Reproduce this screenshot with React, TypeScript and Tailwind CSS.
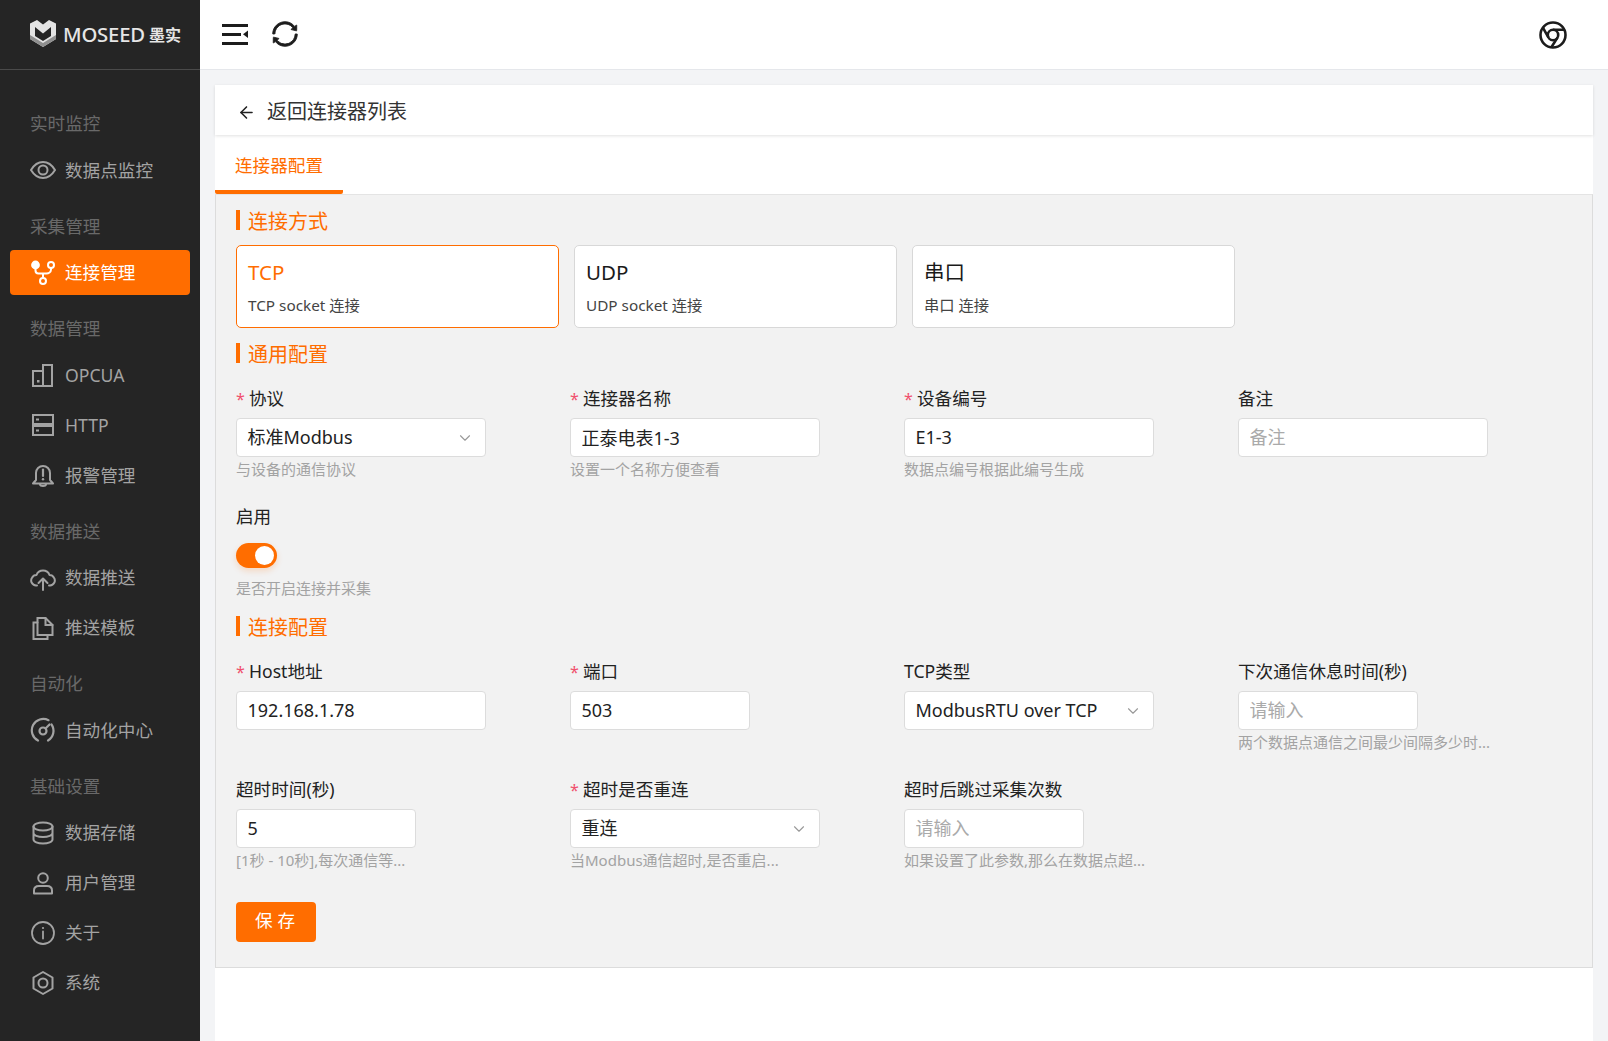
import React from "react";
import { ArrowLeft, ChevronDown } from "lucide-react";
import { AiOutlineSync } from "react-icons/ai";

const S = ({ children, c = "#a3a3a3" }: { children: React.ReactNode; c?: string }) => (
  <svg width="26" height="26" viewBox="0 0 26 26" fill="none" stroke={c} strokeWidth="1.8" strokeLinecap="round" strokeLinejoin="round">
    {children}
  </svg>
);

const icons: Record<string, React.ReactNode> = {
  eye: (
    <S>
      <path d="M1 13c3-5 7-8 12-8s9 3 12 8c-3 5-7 8-12 8S4 18 1 13z" strokeWidth="2" />
      <circle cx="13" cy="13" r="4.5" strokeWidth="2" />
    </S>
  ),
  branch: (
    <S c="#ffffff">
      <circle cx="5.5" cy="5" r="3.5" fill="#fff" />
      <circle cx="21" cy="5" r="3" strokeWidth="2" />
      <circle cx="13" cy="21" r="3" strokeWidth="2" />
      <path d="M5.5 8v2.5c0 2 1.5 3 3 3h8c2 0 4.5-1.5 4.5-4V8M13 13.5V18" strokeWidth="2" />
    </S>
  ),
  building: (
    <S>
      <path d="M3 9h10v15H3zM13 24h9V3h-9v6" strokeLinecap="butt" strokeLinejoin="miter" strokeWidth="2" />
      <rect x="7" y="18" width="2.5" height="2.5" fill="#a3a3a3" stroke="none" />
    </S>
  ),
  server: (
    <S>
      <rect x="3" y="3" width="20" height="9" strokeWidth="2" strokeLinejoin="miter" />
      <rect x="3" y="14" width="20" height="9" strokeWidth="2" strokeLinejoin="miter" />
      <path d="M6 7.5h3M6 18.5h3" strokeLinecap="butt" />
    </S>
  ),
  bell: (
    <S>
      <path d="M6 11a7 7 0 0 1 14 0v7l3 3.5H3L6 18z" strokeWidth="2" />
      <path d="M10 22.5c.5 2 5.500 2 6 0" strokeWidth="2" />
      <path d="M13 7.5v6.500" strokeWidth="2.2" />
      <circle cx="13" cy="17.200" r="1.200" fill="#a3a3a3" stroke="none" />
    </S>
  ),
  cloud: (
    <S>
      <path d="M7 20.500H6A5 5 0 0 1 2 12.800 5 5 0 0 1 6.500 10 7 7 0 0 1 19.500 10 5 5 0 0 1 24 12.800 5 5 0 0 1 20 20.500H19" strokeWidth="2" />
      <path d="M13 25V14M8.500 18l4.500-4.500 4.500 4.500" strokeWidth="2" />
    </S>
  ),
  files: (
    <S>
      <path d="M7.500 3h8l7 7v10h-15z" strokeWidth="2" strokeLinejoin="miter" />
      <path d="M15.500 3v7h7" strokeWidth="2" strokeLinejoin="miter" />
      <path d="M7.500 7.500H3.500V24h14v-4" strokeWidth="2" strokeLinejoin="miter" />
    </S>
  ),
  gauge: (
    <S>
      <path d="M8 23.500A11.200 11.200 0 0 1 18.500 3.200" strokeWidth="2.200" />
      <path d="M21.500 7.500A11.200 11.200 0 0 1 18 23.500" strokeWidth="2.200" />
      <circle cx="13" cy="14" r="3.500" strokeWidth="2.200" />
      <path d="M15.500 11.500l4-4" strokeWidth="2.200" />
    </S>
  ),
  db: (
    <S>
      <ellipse cx="13" cy="6.500" rx="9.500" ry="4" strokeWidth="2" />
      <path d="M3.500 6.500v13c0 2.200 4.200 4 9.500 4s9.500-1.800 9.500-4v-13M3.500 13c0 2.200 4.200 4 9.500 4s9.500-1.800 9.500-4" strokeWidth="2" />
    </S>
  ),
  user: (
    <S>
      <circle cx="13" cy="8" r="4.800" strokeWidth="2" />
      <path d="M4 23.500v-3c0-3 2-4.500 5-4.500h8c3 0 5 1.500 5 4.500v3z" strokeWidth="2" />
    </S>
  ),
  info: (
    <S>
      <circle cx="13" cy="13" r="11" strokeWidth="1.800" />
      <path d="M13 11.500v7" strokeWidth="1.800" />
      <circle cx="13" cy="8" r="1.100" fill="#a3a3a3" stroke="none" />
    </S>
  ),
  hex: (
    <S>
      <path d="M13 2l9.500 5.500v11L13 24l-9.500-5.500v-11z" strokeWidth="2" />
      <circle cx="13" cy="13" r="4.500" strokeWidth="2" />
    </S>
  ),
};

const Label = ({ t }: { t: string }) => (
  <div className="h-[52.5px] pt-[4.5px] flex items-center pl-[30px] text-[17.6px] text-[#696969]">{t}</div>
);

const Item = ({ icon, t, active }: { icon: string; t: string; active?: boolean }) => (
  <div
    className={`h-[45px] mb-[5px] mx-[10px] pl-[20px] flex items-center gap-[9px] rounded-[4px] text-[17.6px] ${
      active ? "bg-[#ff6d00] text-white" : "text-[#a3a3a3]"
    }`}
  >
    <span className="w-[26px] h-[26px] shrink-0">{icons[icon]}</span>
    <span>{t}</span>
  </div>
);

const Sidebar = () => (
  <aside className="w-[200px] shrink-0 bg-[#252525]">
    <div className="h-[70px] border-b border-[#4a4a4a] flex items-center pl-[30px]">
      <svg width="26" height="27" viewBox="0 0 26 27" className="shrink-0 -mt-[2px]">
        <path d="M0 3.500L7 0l6 4.500L19 0l7 3.500V19l-13 8L0 19z" fill="#e4e4e4" />
        <path d="M5 7l8 6.500L21 7v9l-8 5-8-5z" fill="#252525" />
        <path d="M0 15l13 8 13-8v4l-13 8-13-8z" fill="#8f8f8f" />
      </svg>
      <span className="ml-[7px] text-[#e6e6e6] text-[20.3px] font-medium tracking-[-0.2px]">MOSEED</span>
      <span className="ml-[4px] text-[#e6e6e6] text-[16px] font-bold">墨实</span>
    </div>
    <div className="pt-[25px]">
      <Label t="实时监控" />
      <Item icon="eye" t="数据点监控" />
      <Label t="采集管理" />
      <Item icon="branch" t="连接管理" active />
      <Label t="数据管理" />
      <Item icon="building" t="OPCUA" />
      <Item icon="server" t="HTTP" />
      <Item icon="bell" t="报警管理" />
      <Label t="数据推送" />
      <Item icon="cloud" t="数据推送" />
      <Item icon="files" t="推送模板" />
      <Label t="自动化" />
      <Item icon="gauge" t="自动化中心" />
      <Label t="基础设置" />
      <Item icon="db" t="数据存储" />
      <Item icon="user" t="用户管理" />
      <Item icon="info" t="关于" />
      <Item icon="hex" t="系统" />
    </div>
  </aside>
);

const Header = () => (
  <header className="h-[70px] shrink-0 bg-white border-b border-[#e5e7eb] flex items-center pl-[21px] pr-[40px]">
    <svg width="28" height="24" viewBox="0 0 28 24" className="shrink-0 -mt-[2px]" fill="#1c1c1c">
      <rect x="1" y="2" width="26" height="3" />
      <rect x="1" y="11" width="19" height="3" />
      <rect x="1" y="20" width="26" height="3" />
      <path d="M27 8.500v7.500l-5-3.700z" />
    </svg>
    <AiOutlineSync className="ml-[21px] -mt-[2px] text-[#1c1c1c]" size={30} stroke="currentColor" strokeWidth={30} />
    <svg width="30" height="30" viewBox="0 0 30 30" className="ml-auto" fill="none" stroke="#1c1c1c" strokeWidth="2.600">
      <circle cx="15" cy="15" r="12.500" />
      <circle cx="15" cy="15" r="5.200" />
      <path d="M15 9.800h11.500M10.500 17.600L4.900 7.700M19.500 17.600L13.200 27.500" />
    </svg>
  </header>
);

const Section = ({ t, cls = "" }: { t: string; cls?: string }) => (
  <div className={`flex items-center h-[20px] pt-[4px] border-l-[4px] border-[#ff6d00] pl-[8px] text-[20px] text-[#ff6d00] ${cls}`}>{t}</div>
);

const Card = ({ title, sub, active }: { title: string; sub: string; active?: boolean }) => (
  <div className={`w-[322.5px] h-[83px] bg-white rounded-[5px] border pl-[11px] pt-[11px] ${active ? "border-[#ff6d00]" : "border-[#d8d8d8]"}`}>
    <div className={`h-[30px] flex items-center text-[20.5px] ${active ? "text-[#ff6d00]" : "text-[#1a1a1a]"}`}>{title}</div>
    <div className="mt-[8px] h-[20px] flex items-center text-[15.3px] text-[#444]">{sub}</div>
  </div>
);

const Field = ({
  label,
  req,
  w = "w-[250px]",
  value,
  ph,
  select,
  hint,
}: {
  label: string;
  req?: boolean;
  w?: string;
  value?: string;
  ph?: string;
  select?: boolean;
  hint?: string;
}) => (
  <div className="min-w-0">
    <div className="h-[24px] pt-[2px] mb-[8px] flex items-center text-[17.6px] leading-none text-[#222]">
      {req && <span className="w-[13px] text-[#f0506e] text-[16px]">*</span>}
      <span>{label}</span>
    </div>
    {select ? (
      <div className={`${w} h-[39px] bg-white border border-[#dcdcdc] rounded-[4px] pl-[10.5px] pr-[11px] flex items-center justify-between text-[18px] text-[#222]`}>
        <span>{value}</span>
        <ChevronDown size={18} strokeWidth={1.5} className="text-[#999]" />
      </div>
    ) : (
      <input
        readOnly
        value={value ?? ""}
        placeholder={ph}
        className={`${w} h-[39px] block bg-white border border-[#dcdcdc] rounded-[4px] px-[10.5px] pb-[2px] text-[18px] text-[#222] outline-none placeholder:text-[#aaa]`}
      />
    )}
    {hint && <div className="mt-[2px] h-[22px] pb-[2px] flex items-center text-[15px] text-[#a3a3a3] whitespace-nowrap">{hint}</div>}
  </div>
);

const Panel = () => (
  <div className="bg-[#f2f2f2] border border-[#dcdcdc] border-t-[#e4e4e4] pt-[15px] pl-[20px] pb-[25px]">
    <Section t="连接方式" />
    <div className="mt-[15px] flex gap-[15.5px]">
      <Card title="TCP" sub="TCP socket 连接" active />
      <Card title="UDP" sub="UDP socket 连接" />
      <Card title="串口" sub="串口 连接" />
    </div>
    <Section t="通用配置" cls="mt-[15px]" />
    <div className="mt-[23px] grid grid-cols-[334px_334px_334px_334px]">
      <Field req label="协议" select value="标准Modbus" hint="与设备的通信协议" />
      <Field req label="连接器名称" value="正泰电表1-3" hint="设置一个名称方便查看" />
      <Field req label="设备编号" value="E1-3" hint="数据点编号根据此编号生成" />
      <Field label="备注" ph="备注" />
    </div>
    <div className="mt-[24px] h-[24px] pb-[2px] flex items-center text-[17.6px] text-[#222]">启用</div>
    <div className="mt-[14px] w-[41px] h-[25px] rounded-full bg-[#ff6d00] flex items-center justify-end pr-[3px] shadow-[0_3px_6px_rgba(255,109,0,0.2)]">
      <div className="w-[19px] h-[19px] rounded-full bg-white" />
    </div>
    <div className="mt-[10px] h-[20px] flex items-center text-[15px] text-[#a3a3a3]">是否开启连接并采集</div>
    <Section t="连接配置" cls="mt-[18px]" />
    <div className="mt-[23px] grid grid-cols-[334px_334px_334px_334px]">
      <Field req label="Host地址" value="192.168.1.78" />
      <Field req label="端口" w="w-[180px]" value="503" />
      <Field label="TCP类型" select value="ModbusRTU over TCP" />
      <Field label="下次通信休息时间(秒)" w="w-[180px]" ph="请输入" hint="两个数据点通信之间最少间隔多少时..." />
    </div>
    <div className="mt-[23px] grid grid-cols-[334px_334px_334px_334px]">
      <Field label="超时时间(秒)" w="w-[180px]" value="5" hint="[1秒 - 10秒],每次通信等..." />
      <Field req label="超时是否重连" select value="重连" hint="当Modbus通信超时,是否重启..." />
      <Field label="超时后跳过采集次数" w="w-[180px]" ph="请输入" hint="如果设置了此参数,那么在数据点超..." />
    </div>
    <button className="mt-[30px] w-[80px] h-[40px] pb-[3px] pl-[3px] rounded-[4px] bg-[#ff6d00] text-white text-[17.6px] tracking-[5px] block">保存</button>
  </div>
);

export default function App() {
  return (
    <div className="flex w-[1608px] h-[1041px] overflow-hidden bg-[#f3f4f6] font-['Noto_Sans','Noto_Sans_CJK_SC',sans-serif]">
      <Sidebar />
      <div className="flex-1 min-w-0 flex flex-col">
        <Header />
        <main className="flex-1 px-[15px] pt-[15px] flex flex-col min-h-0">
          <div className="relative z-10 h-[50px] shrink-0 pt-[4px] bg-white shadow-[0_1px_3px_rgba(0,0,0,0.12)] flex items-center pl-[22px] text-[20px] text-[#333]">
            <ArrowLeft size={19} strokeWidth={2} className="text-[#222]" />
            <span className="ml-[11px]">返回连接器列表</span>
          </div>
          <div className="flex-1 bg-white">
            <div className="h-[59px] w-[128px] pt-[6px] border-b-[4px] border-[#ff6d00] rounded-b-[2px] flex items-center pl-[20px] text-[17.6px] text-[#ff6d00] whitespace-nowrap">
              连接器配置
            </div>
            <Panel />
          </div>
        </main>
      </div>
    </div>
  );
}
